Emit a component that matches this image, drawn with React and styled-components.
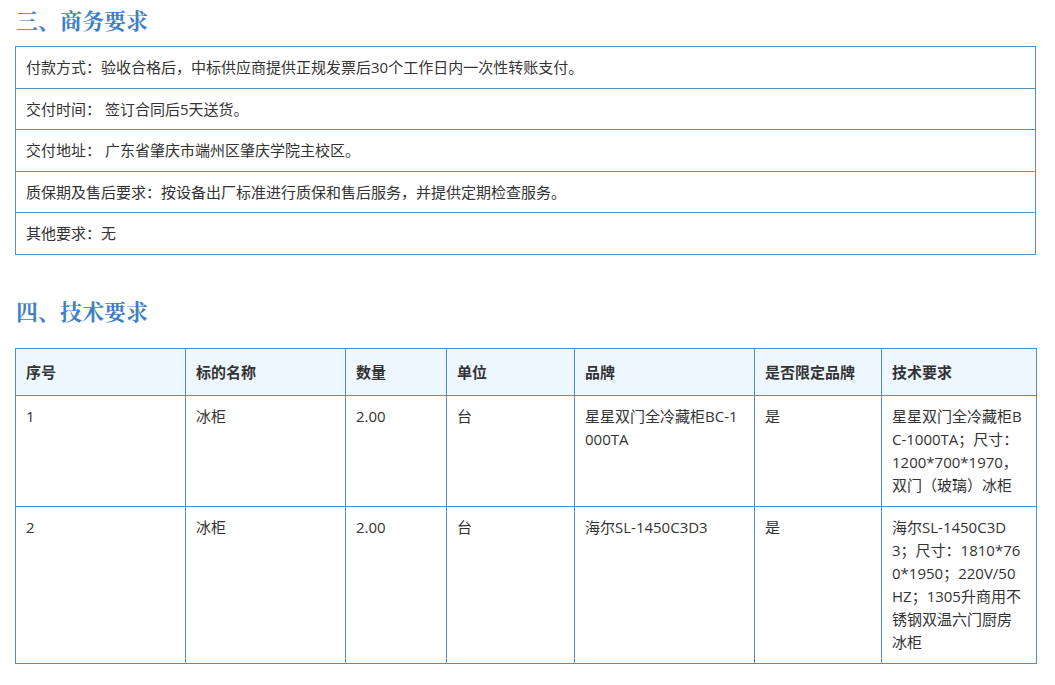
import styled, { createGlobalStyle } from "styled-components";

const GlobalStyle = createGlobalStyle`
  body {
    margin: 0;
    background: #fff;
    font-family: "Open Sans", "Noto Sans CJK SC", sans-serif;
    color: #333;
  }
`;

const business = [
  "付款方式：验收合格后，中标供应商提供正规发票后30个工作日内一次性转账支付。",
  "交付时间： 签订合同后5天送货。",
  "交付地址： 广东省肇庆市端州区肇庆学院主校区。",
  "质保期及售后要求：按设备出厂标准进行质保和售后服务，并提供定期检查服务。",
  "其他要求：无",
];

const columns = [
  { title: "序号", width: 170 },
  { title: "标的名称", width: 160 },
  { title: "数量", width: 101 },
  { title: "单位", width: 128 },
  { title: "品牌", width: 180 },
  { title: "是否限定品牌", width: 127 },
  { title: "技术要求", width: 155 },
];

const items = [
  ["1", "冰柜", "2.00", "台", "星星双门全冷藏柜BC-1000TA", "是", "星星双门全冷藏柜BC-1000TA；尺寸：1200*700*1970，双门（玻璃）冰柜"],
  ["2", "冰柜", "2.00", "台", "海尔SL-1450C3D3", "是", "海尔SL-1450C3D3；尺寸：1810*760*1950；220V/50HZ；1305升商用不锈钢双温六门厨房冰柜"],
];

export default function App() {
  return (
    <Page>
      <GlobalStyle />
      <Heading $top={5} $bottom={11}>三、商务要求</Heading>
      <InfoBox>
        {business.map((t) => (
          <InfoRow key={t}>{t}</InfoRow>
        ))}
      </InfoBox>

      <Heading $top={41} $bottom={22}>四、技术要求</Heading>
      <Table>
        <colgroup>
          {columns.map((c) => (
            <col key={c.title} style={{ width: c.width }} />
          ))}
        </colgroup>
        <thead>
          <tr>
            {columns.map((c) => (
              <Th key={c.title}>{c.title}</Th>
            ))}
          </tr>
        </thead>
        <tbody>
          {items.map((row) => (
            <tr key={row[0]}>
              {row.map((cell, i) => (
                <Td key={i}>{cell}</Td>
              ))}
            </tr>
          ))}
        </tbody>
      </Table>
    </Page>
  );
}

const Page = styled.div`
  width: 1021px;
  margin-left: 15px;
  padding-bottom: 20px;
`;

const Heading = styled.h2`
  margin: ${(p) => p.$top}px 0 ${(p) => p.$bottom}px 1px;
  font-family: "Noto Serif CJK SC", "Noto Sans CJK SC", serif;
  font-size: 22px;
  line-height: 30px;
  font-weight: 700;
  color: #3d80c8;
`;

const InfoBox = styled.div`
  display: flex;
  flex-direction: column;
  border: 1px solid #5a90c0;
`;

const InfoRow = styled.div`
  padding: 10px 10px;
  font-size: 15px;
  line-height: 20.6px;
  & + & {
    border-top: 1px solid #5a90c0;
  }
`;

const Table = styled.table`
  width: 100%;
  table-layout: fixed;
  border-collapse: collapse;
  border: 1px solid #4b90c9;
  font-size: 15px;
`;

const Th = styled.th`
  background: #eef7fe;
  border: 1px solid #4b90c9;
  padding: 12px 10px;
  line-height: 22px;
  text-align: left;
  font-weight: 700;
  color: #333;
`;

const Td = styled.td`
  border: 1px solid #4b90c9;
  padding: 9px 12px 9px 10px;
  line-height: 23px;
  vertical-align: top;
  word-break: break-all;
  color: #333;
`;
